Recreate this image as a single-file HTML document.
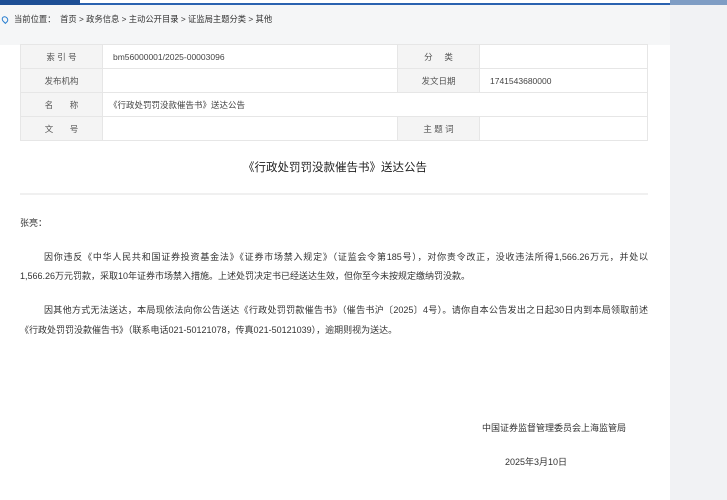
<!DOCTYPE html>
<html><head><meta charset="utf-8"><style>
*{margin:0;padding:0;box-sizing:border-box}
body{width:727px;height:500px;background:#f5f6f7;font-family:"Liberation Sans","Noto Sans CJK SC",sans-serif;color:#333;position:relative;overflow:hidden}
.topl{position:absolute;left:0;top:0;width:80px;height:5px;background:#1d4f95}
.topm{position:absolute;left:80px;top:0;width:590px;height:5px;background:#fff;border-bottom:2px solid #2a62b0}
.topr{position:absolute;left:670px;top:0;width:57px;height:5px;background:#7f9dc4}
.crumb{position:absolute;left:0;top:13px;font-size:8.3px;color:#333;white-space:nowrap}
.crumb span.pin{display:inline-block;width:6px;height:7px;border:1.5px solid #2a7fd0;border-radius:50% 50% 50% 0;transform:rotate(-45deg);margin:0 6px 0 2px;vertical-align:-1px}
.panel{position:absolute;left:0;top:45px;width:670px;height:455px;background:#fff}
.side{position:absolute;left:670px;top:5px;width:57px;height:495px;background:#f1f2f4}
table{position:absolute;left:20px;top:44px;width:628px;border-collapse:collapse;font-size:8.5px}
td{border:1px solid #e6e6e6;height:24px;padding:0 10px;color:#444}
td.l{background:#f4f4f4;text-align:center;width:82px;color:#555}
.title{position:absolute;left:0;width:670px;top:159px;text-align:center;font-size:11.5px;color:#222}
.hr{position:absolute;left:20px;width:628px;top:193px;height:2px;background:#f0f0f0}
.t{position:absolute;font-size:9px;color:#333;white-space:nowrap}
.j{white-space:normal;text-align:justify;text-align-last:justify}
</style></head><body>
<div class="panel"></div><div class="side"></div>
<div class="topl"></div><div class="topm"></div><div class="topr"></div>
<div class="crumb"><span class="pin"></span>当前位置：&nbsp; 首页 &gt; 政务信息 &gt; 主动公开目录 &gt; 证监局主题分类 &gt; 其他</div>
<table>
<tr><td class="l">索 引 号</td><td style="width:295px">bm56000001/2025-00003096</td><td class="l" style="width:81px">分 &nbsp; &nbsp; 类</td><td></td></tr>
<tr><td class="l">发布机构</td><td></td><td class="l">发文日期</td><td>1741543680000</td></tr>
<tr><td class="l">名 &nbsp; &nbsp; &nbsp; 称</td><td colspan="3" style="padding-left:6px">《行政处罚罚没款催告书》送达公告</td></tr>
<tr><td class="l">文 &nbsp; &nbsp; &nbsp; 号</td><td></td><td class="l">主 题 词</td><td></td></tr>
</table>
<div class="title">《行政处罚罚没款催告书》送达公告</div>
<div class="hr"></div>
<div class="t" style="left:20px;top:216px">张亮：</div>
<div class="t j" style="left:44px;top:250px;width:604px">因你违反《中华人民共和国证券投资基金法》《证券市场禁入规定》（证监会令第185号），对你责令改正，没收违法所得1,566.26万元，并处以</div>
<div class="t" style="left:20px;top:269px">1,566.26万元罚款，采取10年证券市场禁入措施。上述处罚决定书已经送达生效，但你至今未按规定缴纳罚没款。</div>
<div class="t j" style="left:44px;top:303px;width:604px">因其他方式无法送达，本局现依法向你公告送达《行政处罚罚款催告书》（催告书沪〔2025〕4号）。请你自本公告发出之日起30日内到本局领取前述</div>
<div class="t" style="left:20px;top:323px">《行政处罚罚没款催告书》（联系电话021-50121078，传真021-50121039），逾期则视为送达。</div>
<div class="t" style="left:482px;top:421px">中国证券监督管理委员会上海监管局</div>
<div class="t" style="left:505px;top:455px">2025年3月10日</div>
</body></html>
